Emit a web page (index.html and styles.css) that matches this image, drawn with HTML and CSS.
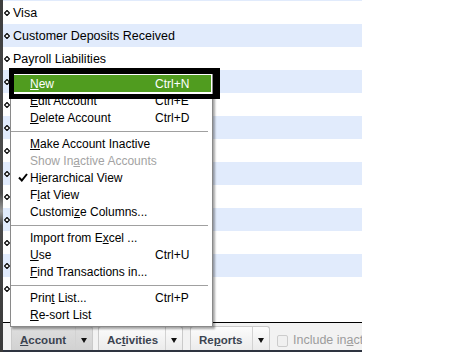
FILE: index.html
```html
<html lang="en">
<head>
    <meta charset="UTF-8">
    <title>Chart of Accounts</title>
    <link rel="stylesheet" href="styles.css">
</head>
<body>
    <div class="app">
        <div class="edge"></div>
        <div class="main">
            <!-- account list -->
            <div class="list">
                <div class="row"><span class="bullet"><svg width="6" height="6" viewBox="0 0 6 6"><polygon points="3,0.5 5.5,3 3,5.5 0.5,3" fill="#fff" stroke="#000" stroke-width="1.2"/></svg></span>Visa</div>
                <div class="row"><span class="bullet"><svg width="6" height="6" viewBox="0 0 6 6"><polygon points="3,0.5 5.5,3 3,5.5 0.5,3" fill="#fff" stroke="#000" stroke-width="1.2"/></svg></span>Customer Deposits Received</div>
                <div class="row"><span class="bullet"><svg width="6" height="6" viewBox="0 0 6 6"><polygon points="3,0.5 5.5,3 3,5.5 0.5,3" fill="#fff" stroke="#000" stroke-width="1.2"/></svg></span>Payroll Liabilities</div>
                <div class="row"><span class="bullet"><svg width="6" height="6" viewBox="0 0 6 6"><polygon points="3,0.5 5.5,3 3,5.5 0.5,3" fill="#fff" stroke="#000" stroke-width="1.2"/></svg></span></div>
                <div class="row"><span class="bullet"><svg width="6" height="6" viewBox="0 0 6 6"><polygon points="3,0.5 5.5,3 3,5.5 0.5,3" fill="#fff" stroke="#000" stroke-width="1.2"/></svg></span></div>
                <div class="row"><span class="bullet"><svg width="6" height="6" viewBox="0 0 6 6"><polygon points="3,0.5 5.5,3 3,5.5 0.5,3" fill="#fff" stroke="#000" stroke-width="1.2"/></svg></span></div>
                <div class="row"><span class="bullet"><svg width="6" height="6" viewBox="0 0 6 6"><polygon points="3,0.5 5.5,3 3,5.5 0.5,3" fill="#fff" stroke="#000" stroke-width="1.2"/></svg></span></div>
                <div class="row"><span class="bullet"><svg width="6" height="6" viewBox="0 0 6 6"><polygon points="3,0.5 5.5,3 3,5.5 0.5,3" fill="#fff" stroke="#000" stroke-width="1.2"/></svg></span></div>
                <div class="row"><span class="bullet"><svg width="6" height="6" viewBox="0 0 6 6"><polygon points="3,0.5 5.5,3 3,5.5 0.5,3" fill="#fff" stroke="#000" stroke-width="1.2"/></svg></span></div>
                <div class="row"><span class="bullet"><svg width="6" height="6" viewBox="0 0 6 6"><polygon points="3,0.5 5.5,3 3,5.5 0.5,3" fill="#fff" stroke="#000" stroke-width="1.2"/></svg></span></div>
                <div class="row"><span class="bullet"><svg width="6" height="6" viewBox="0 0 6 6"><polygon points="3,0.5 5.5,3 3,5.5 0.5,3" fill="#fff" stroke="#000" stroke-width="1.2"/></svg></span></div>
                <div class="row"><span class="bullet"><svg width="6" height="6" viewBox="0 0 6 6"><polygon points="3,0.5 5.5,3 3,5.5 0.5,3" fill="#fff" stroke="#000" stroke-width="1.2"/></svg></span></div>
                <div class="row"><span class="bullet"><svg width="6" height="6" viewBox="0 0 6 6"><polygon points="3,0.5 5.5,3 3,5.5 0.5,3" fill="#fff" stroke="#000" stroke-width="1.2"/></svg></span></div>
            </div>

            <!-- bottom toolbar -->
            <div class="toolbar">
                <div class="btn btn-account active">
                    <span class="btn-label"><u>A</u>ccount</span>
                    <span class="btn-arrow"><span class="tri"></span></span>
                </div>
                <div class="btn btn-activities">
                    <span class="btn-label">Ac<u>t</u>ivities</span>
                    <span class="btn-arrow"><span class="tri"></span></span>
                </div>
                <div class="btn btn-reports">
                    <span class="btn-label">Re<u>p</u>orts</span>
                    <span class="btn-arrow"><span class="tri"></span></span>
                </div>
                <span class="checkbox"></span>
                <span class="include">Include in<u>a</u>ctive</span>
            </div>
        </div>
    </div>

    <!-- Account dropdown menu -->
    <div class="menu">
        <div class="item hot"><span class="check"></span><span class="label"><u>N</u>ew</span><span class="key">Ctrl+N</span></div>
        <div class="item"><span class="check"></span><span class="label"><u>E</u>dit Account</span><span class="key">Ctrl+E</span></div>
        <div class="item"><span class="check"></span><span class="label"><u>D</u>elete Account</span><span class="key">Ctrl+D</span></div>
        <div class="sep"></div>
        <div class="item"><span class="check"></span><span class="label"><u>M</u>ake Account Inactive</span></div>
        <div class="item disabled"><span class="check"></span><span class="label">Show In<u>a</u>ctive Accounts</span></div>
        <div class="item"><span class="check"><svg width="10" height="9" viewBox="0 0 10 9"><path d="M1 4.5 L3.8 7.5 L9 1" fill="none" stroke="#000" stroke-width="2"/></svg></span><span class="label">H<u>i</u>erarchical View</span></div>
        <div class="item"><span class="check"></span><span class="label">F<u>l</u>at View</span></div>
        <div class="item"><span class="check"></span><span class="label">Customi<u>z</u>e Columns...</span></div>
        <div class="sep"></div>
        <div class="item"><span class="check"></span><span class="label">Import from E<u>x</u>cel ...</span></div>
        <div class="item"><span class="check"></span><span class="label"><u>U</u>se</span><span class="key">Ctrl+U</span></div>
        <div class="item"><span class="check"></span><span class="label"><u>F</u>ind Transactions in...</span></div>
        <div class="sep"></div>
        <div class="item"><span class="check"></span><span class="label">Prin<u>t</u> List...</span><span class="key">Ctrl+P</span></div>
        <div class="item"><span class="check"></span><span class="label"><u>R</u>e-sort List</span></div>
    </div>

    <!-- highlight frame around New -->
    <div class="frame"></div>
</body>
</html>
```

FILE: styles.css
```css
body {
    margin: 0;
    background-color: #ffffff;
    font-family: "Liberation Sans", Arial, sans-serif;
    color: #000000;
}

.app {
    display: flex;
    width: 362px;
    height: 352px;
}

.edge {
    flex: none;
    width: 3px;
    background: linear-gradient(#3e3e3e, #505050 55%, #9a9a9a 60%, #4a4a4a 64%, #3a3a3a);
}

.main {
    flex: 1;
    min-width: 0;
    overflow: hidden;
    display: flex;
    flex-direction: column;
}

.list {
    flex: 1;
    border-top: 1px solid #e1ebfc;
    overflow: hidden;
}

.row {
    height: 23px;
    display: flex;
    align-items: center;
    padding-left: 1px;
    font-size: 12.5px;
}

.row:nth-child(even) {
    background-color: #e1ebfc; /* light blue stripe */
}

.bullet {
    flex: none;
    width: 6px;
    height: 6px;
    margin-right: 3px;
    display: flex;
}

/* bottom bar */
.toolbar {
    flex: none;
    height: 27px;
    border-top: 1px solid #000000;
    border-bottom: 2px solid #2e3440;
    background-color: #f2f2f2;
    display: flex;
    align-items: flex-end;
    padding-left: 8px;
    overflow: hidden;
}

.btn {
    flex: none;
    height: 24px;
    box-sizing: border-box;
    display: flex;
    border: 1px solid #cacaca;
    border-bottom: none;
    border-radius: 3px 3px 0 0;
    background: linear-gradient(#fcfcfc, #ebebeb);
    font-size: 11.5px;
    font-weight: bold;
    color: #3b4350;
}

.btn.active {
    background: linear-gradient(#dedede, #d2d2d2);
}

.btn-account { width: 82px; margin-right: 5px; }
.btn-activities { width: 85px; margin-right: 7px; }
.btn-reports { width: 80px; margin-right: 7px; }

.btn-label {
    flex: 1;
    padding: 3px 0 0 8px;
    display: flex;
    align-items: center;
}

.btn-arrow {
    width: 16px;
    border-left: 1px solid #d2d2d2;
    display: flex;
    align-items: center;
    justify-content: center;
    padding-top: 3px;
}

.tri {
    width: 0;
    height: 0;
    border-left: 3.5px solid transparent;
    border-right: 3.5px solid transparent;
    border-top: 5px solid #111111;
}

.checkbox {
    flex: none;
    width: 11px;
    height: 12px;
    margin: 0 5px 3px 0;
    border: 1px solid #cccccc;
    border-radius: 2px;
    background-color: #f0f0f0;
    box-sizing: border-box;
}

.include {
    flex: none;
    font-size: 12.5px;
    color: #9c9c9c;
    white-space: nowrap;
    padding-bottom: 3px;
}

/* dropdown menu */
.menu {
    position: absolute;
    left: 10px;
    top: 72px;
    width: 203px;
    box-sizing: border-box;
    border: 1px solid #8a8a8a;
    background-color: #ffffff;
    padding: 2px 0 3px 0;
    box-shadow: 2px 2px 2px rgba(0, 0, 0, 0.35);
    font-size: 12px;
}

.item {
    height: 17px;
    display: flex;
    align-items: center;
    margin: 0 1px 0 3px;
}

.item.hot {
    background-color: #509c1f;
    color: #ffffff;
}

.item.disabled {
    color: #a3a3a3;
}

.check {
    width: 16px;
    display: flex;
    justify-content: center;
    padding-left: 2px;
    box-sizing: border-box;
}

.label {
    width: 125px;
    white-space: nowrap;
}

.key {
    white-space: nowrap;
}

.sep {
    height: 9px;
    box-sizing: border-box;
    padding-top: 5px;
    margin-right: 4px;
}

.sep::after {
    content: "";
    display: block;
    border-top: 1px solid #a0a0a0;
}

/* black annotation frame over the New item */
.frame {
    position: absolute;
    left: 9px;
    top: 68px;
    width: 211px;
    height: 31px;
    box-sizing: border-box;
    border-style: solid;
    border-color: #000000;
    border-width: 6px 7px 5px 5px;
}
```
